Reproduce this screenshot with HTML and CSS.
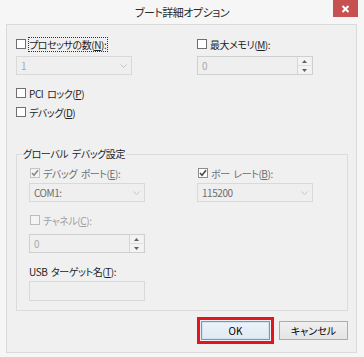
FILE: index.html
```html
<!DOCTYPE html>
<html lang="ja">
<head>
    <meta charset="UTF-8">
    <meta name="viewport" content="width=device-width, initial-scale=1.0">
    <title>ブート詳細オプション</title>
    <link rel="stylesheet" href="styles.css">
</head>
<body>
    <div class="window">
        <div class="titlebar">
            <span class="title">ブート詳細オプション</span>
            <button class="close" aria-label="閉じる">
                <svg width="9" height="8" viewBox="0 0 9 8"><path d="M1.5 1 L7.5 7 M7.5 1 L1.5 7" stroke="#fff" stroke-width="2"/></svg>
            </button>
        </div>

        <div class="client">
            <div class="two-col">
                <div class="col">
                    <label class="check">
                        <span class="box"></span>
                        <span class="focus-ring">プロセッサの数(<u>N</u>):</span>
                    </label>
                    <div class="combo disabled">
                        <span>1</span>
                        <svg class="chevron" width="7" height="4" viewBox="0 0 7 4"><path d="M0.5 0.5 L3.5 3.5 L6.5 0.5" fill="none" stroke="#c4c4c4"/></svg>
                    </div>
                </div>
                <div class="col">
                    <label class="check">
                        <span class="box"></span>
                        <span>最大メモリ(<u>M</u>):</span>
                    </label>
                    <div class="spin">
                        <span class="value">0</span>
                        <div class="spin-btns">
                            <span class="spin-btn"><svg width="5" height="3" viewBox="0 0 5 3"><path d="M0 3 L2.5 0 L5 3 Z" fill="#606060"/></svg></span>
                            <span class="spin-btn"><svg width="5" height="3" viewBox="0 0 5 3"><path d="M0 0 L2.5 3 L5 0 Z" fill="#606060"/></svg></span>
                        </div>
                    </div>
                </div>
            </div>

            <div class="check-list">
                <label class="check">
                    <span class="box"></span>
                    <span>PCI ロック(<u>P</u>)</span>
                </label>
                <label class="check">
                    <span class="box"></span>
                    <span>デバッグ(<u>D</u>)</span>
                </label>
            </div>

            <fieldset class="group">
                <legend>グローバル デバッグ設定</legend>
                <div class="group-body">
                    <div class="two-col narrow">
                        <div class="col">
                            <label class="check dim">
                                <span class="box off checked">
                                    <svg width="8" height="8" viewBox="0 0 8 8"><path d="M1 4 L3 6.2 L7 1.2" fill="none" stroke="#8a8a8a" stroke-width="1.6"/></svg>
                                </span>
                                <span>デバッグ ポート(<u>E</u>):</span>
                            </label>
                            <div class="combo">
                                <span>COM1:</span>
                                <svg class="chevron" width="7" height="4" viewBox="0 0 7 4"><path d="M0.5 0.5 L3.5 3.5 L6.5 0.5" fill="none" stroke="#c4c4c4"/></svg>
                            </div>
                        </div>
                        <div class="col">
                            <label class="check dim">
                                <span class="box checked">
                                    <svg width="8" height="8" viewBox="0 0 8 8"><path d="M1 4 L3 6.2 L7 1.2" fill="none" stroke="#4a4a4a" stroke-width="1.6"/></svg>
                                </span>
                                <span>ボー レート(<u>B</u>):</span>
                            </label>
                            <div class="combo">
                                <span>115200</span>
                                <svg class="chevron" width="7" height="4" viewBox="0 0 7 4"><path d="M0.5 0.5 L3.5 3.5 L6.5 0.5" fill="none" stroke="#c4c4c4"/></svg>
                            </div>
                        </div>
                    </div>

                    <label class="check faint channel">
                        <span class="box off"></span>
                        <span>チャネル(<u>C</u>):</span>
                    </label>
                    <div class="spin field">
                        <span class="value">0</span>
                        <div class="spin-btns">
                            <span class="spin-btn"><svg width="5" height="3" viewBox="0 0 5 3"><path d="M0 3 L2.5 0 L5 3 Z" fill="#606060"/></svg></span>
                            <span class="spin-btn"><svg width="5" height="3" viewBox="0 0 5 3"><path d="M0 0 L2.5 3 L5 0 Z" fill="#606060"/></svg></span>
                        </div>
                    </div>

                    <div class="field-label">USB ターゲット名(<u>T</u>):</div>
                    <div class="textbox field"></div>
                </div>
            </fieldset>

            <div class="buttons">
                <div class="mark">
                    <button class="btn default">OK</button>
                </div>
                <button class="btn">キャンセル</button>
            </div>
        </div>
    </div>
</body>
</html>
```

FILE: styles.css
```css
body {
    margin: 0;
    font-family: "Noto Sans CJK JP", "Noto Sans", sans-serif;
    font-size: 10px;
    letter-spacing: -0.45px;
    word-spacing: 2px;
    font-feature-settings: "palt";
    color: #1e1e1e;
    background: #f6f6f6;
}
.window {
    width: 364px;
    height: 357px;
    box-sizing: border-box;
    display: flex;
    flex-direction: column;
    background: #f6f6f6;
}
.titlebar {
    height: 24px;
    display: grid;
    grid-template-columns: 1fr auto 1fr;
}
.title {
    grid-column: 2;
    align-self: center;
    font-size: 11px;
    letter-spacing: -0.5px;
    line-height: 16px;
    color: #2a2a2a;
    padding-bottom: 1px;
}
.close {
    grid-column: 3;
    justify-self: end;
    align-self: start;
    margin-right: 6px;
    width: 25px;
    height: 17px;
    border: none;
    padding: 0;
    background: #c75050;
    display: flex;
    align-items: center;
    justify-content: center;
}
.client {
    flex: 1;
    margin: 0 7px 4px 6px;
    border: 1px solid #dadada;
    background: #f0f0f0;
    padding: 12px 8px 0 9px;
}
.two-col {
    display: grid;
    grid-template-columns: 116px 116px;
    column-gap: 65px;
}
.two-col.narrow {
    column-gap: 52px;
}
.col {
    display: flex;
    flex-direction: column;
}
.check {
    display: flex;
    align-items: center;
    gap: 3px;
    height: 14px;
    line-height: 13px;
    white-space: nowrap;
}
.box {
    width: 10px;
    height: 10px;
    box-sizing: border-box;
    border: 1px solid #6f6f6f;
    background: #fff;
    display: flex;
    align-items: center;
    justify-content: center;
    flex-shrink: 0;
}
.box.off {
    border-color: #bcbcbc;
    background: #f4f4f4;
}
.box.checked {
    border-color: #8c8c8c;
}
.box.off.checked {
    border-color: #c4c4c4;
}
.check.dim {
    color: #6d6d6d;
}
.check.faint {
    color: #a0a0a0;
}
.focus-ring {
    outline: 1px dotted #333;
    padding-right: 1px;
}
u {
    text-decoration-thickness: 1px;
    text-underline-offset: 1px;
}
.combo, .spin, .textbox {
    box-sizing: border-box;
    height: 19px;
    border: 1px solid #d9d9d9;
    background: #efefef;
    display: flex;
    align-items: center;
}
.combo {
    margin-top: 5px;
    justify-content: space-between;
    padding: 0 4px 0 4px;
    color: #6d6d6d;
}
.combo.disabled {
    color: #a8a8a8;
}
.spin {
    margin-top: 5px;
    border-color: #cfcfcf;
    padding-left: 4px;
    color: #a8a8a8;
}
.spin .value {
    flex: 1;
}
.spin-btns {
    width: 13px;
    height: 17px;
    margin-right: 1px;
    border-left: 1px solid #d6d6d6;
    display: flex;
    flex-direction: column;
}
.spin-btn {
    flex: 1;
    display: flex;
    align-items: center;
    justify-content: center;
    background: #f3f3f3;
}
.spin-btn + .spin-btn {
    border-top: 1px solid #dedede;
}
.check-list {
    margin-top: 11px;
    display: flex;
    flex-direction: column;
    gap: 5px;
}
.group {
    margin: 28px 0 0 0;
    padding: 0 0 9px 5px;
    border: 1px solid #dcdcdc;
}
.group legend {
    padding: 0 1px;
    line-height: 14px;
    color: #1e1e1e;
}
.group-body {
    padding: 5px 0 0 7px;
}
.group .check {
    padding-left: 1px;
}
.group .combo {
    margin-top: 3px;
}
.channel {
    margin-top: 11px;
}
.field {
    width: 116px;
}
.group .spin {
    margin-top: 7px;
}
.field-label {
    margin-top: 12px;
    height: 14px;
    line-height: 14px;
}
.textbox {
    margin-top: 2px;
    height: 20px;
}
.buttons {
    margin-top: 6px;
    display: flex;
    justify-content: flex-end;
    align-items: center;
    gap: 5px;
}
.mark {
    border: 3px solid #e3141c;
    padding: 1px;
    display: flex;
}
.btn {
    width: 69px;
    height: 19px;
    box-sizing: border-box;
    padding: 0;
    border: 1px solid #acacac;
    background: linear-gradient(#f0f0f0, #e4e4e4);
    font: inherit;
    font-size: 10px;
    color: #000;
}
.btn.default {
    border-color: #5f9fd9;
    background: linear-gradient(#ecf3fa, #e1e9f1);
    box-shadow: inset 0 0 0 1px #cfe3f6;
}
```
